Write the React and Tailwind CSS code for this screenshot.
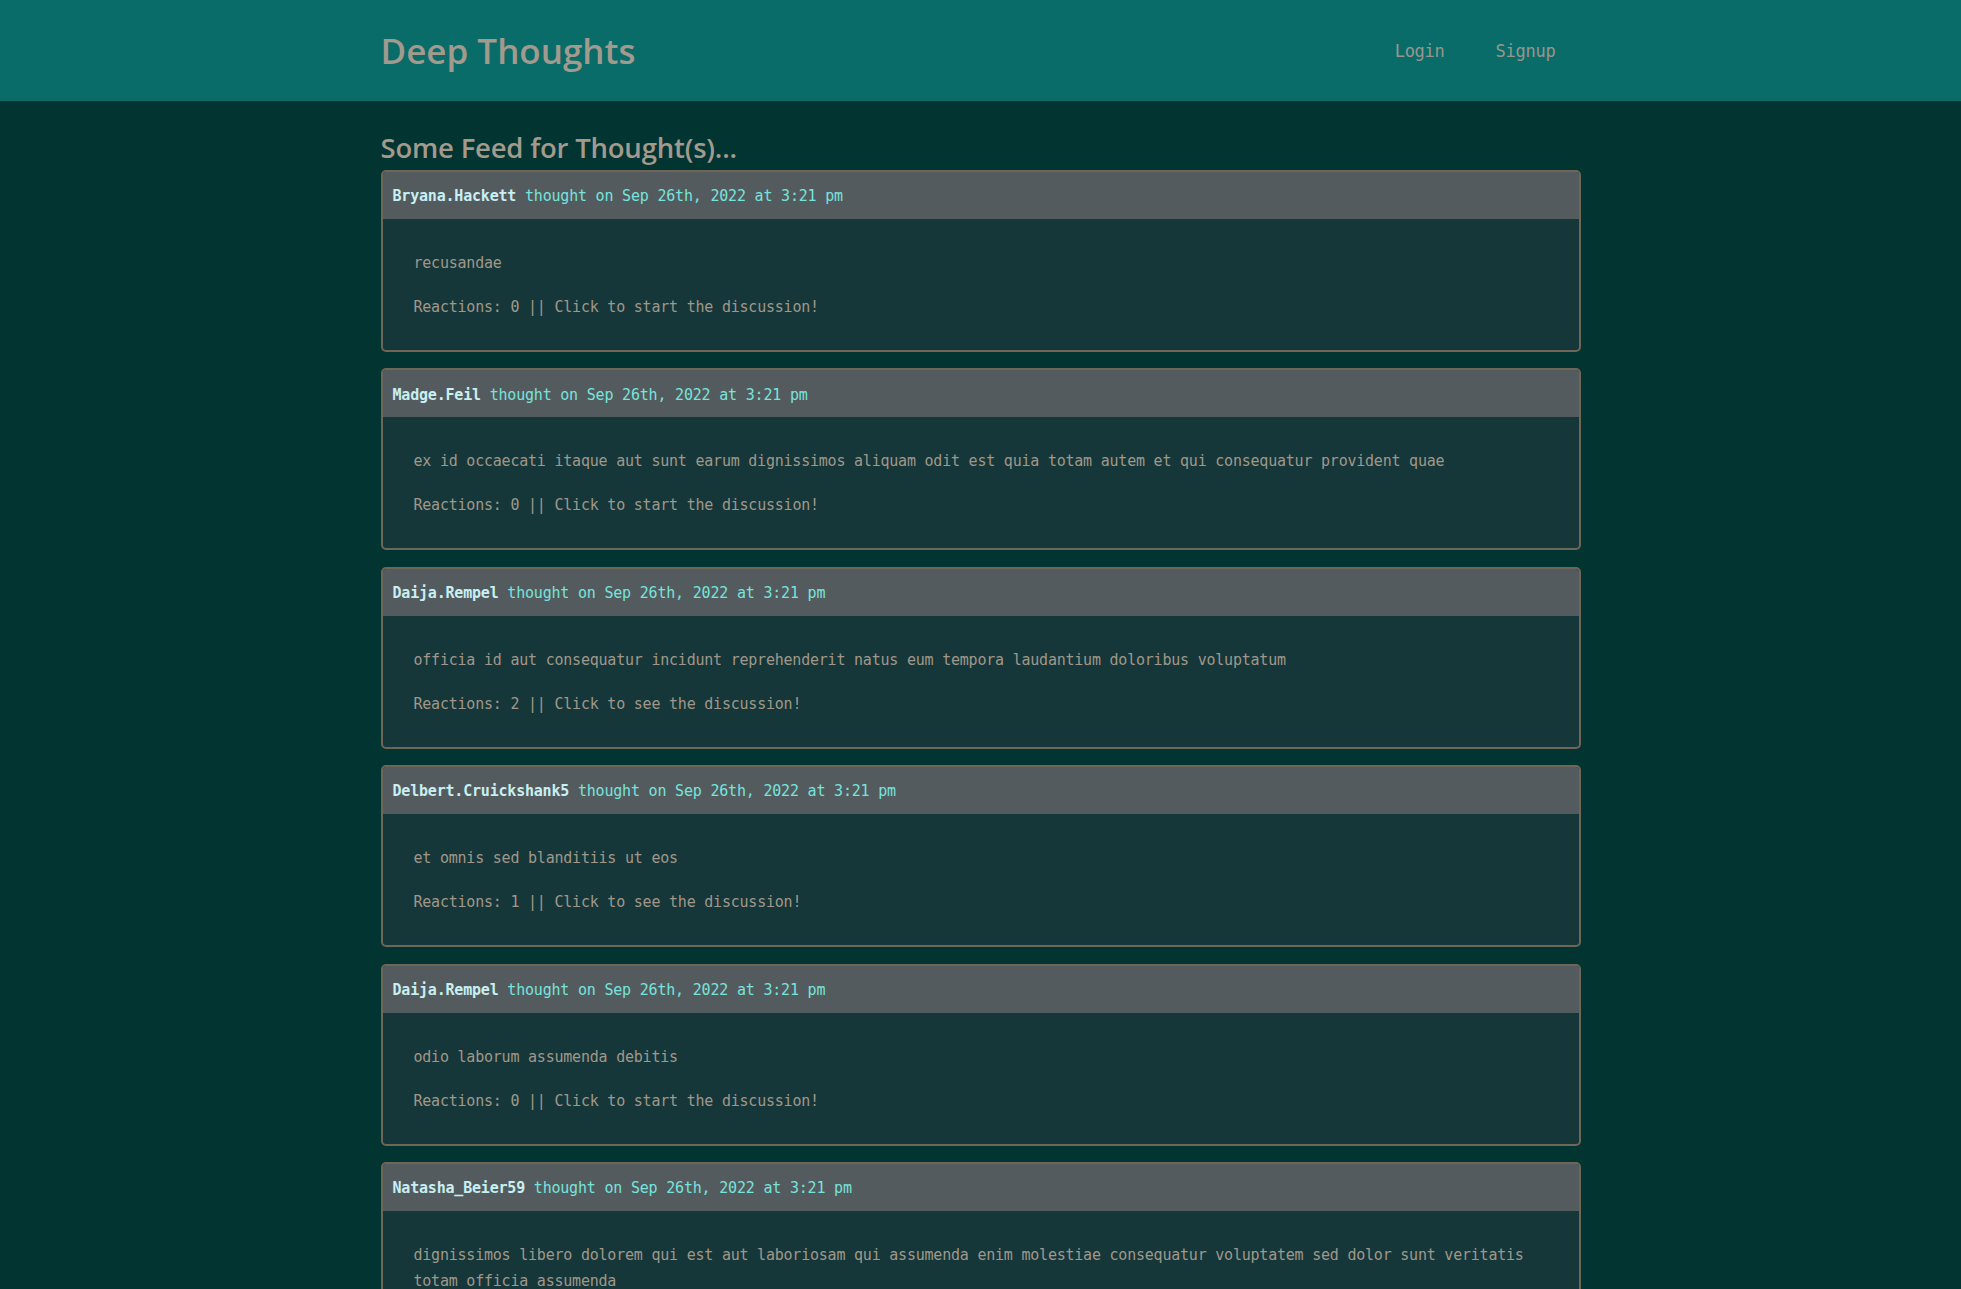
import React from "react";

const thoughts = [
  { user: "Bryana.Hackett", text: "recusandae", reactions: 0 },
  {
    user: "Madge.Feil",
    text: "ex id occaecati itaque aut sunt earum dignissimos aliquam odit est quia totam autem et qui consequatur provident quae",
    reactions: 0,
  },
  {
    user: "Daija.Rempel",
    text: "officia id aut consequatur incidunt reprehenderit natus eum tempora laudantium doloribus voluptatum",
    reactions: 2,
  },
  { user: "Delbert.Cruickshank5", text: "et omnis sed blanditiis ut eos", reactions: 1 },
  { user: "Daija.Rempel", text: "odio laborum assumenda debitis", reactions: 0 },
  {
    user: "Natasha_Beier59",
    text: "dignissimos libero dolorem qui est aut laboriosam qui assumenda enim molestiae consequatur voluptatem sed dolor sunt veritatis totam officia assumenda",
    reactions: 0,
  },
];

const mono = { fontFamily: '"DejaVu Sans Mono", "Liberation Mono", monospace' };

function Card({ t }) {
  return (
    <div className="border-2 border-[#6e6656] rounded-[5px] overflow-hidden bg-[#163739]">
      <div
        className="h-[47px] bg-[#545b5e] flex items-center px-[10px] pt-[2px] text-[15px] tracking-[-0.2px] whitespace-nowrap"
        style={mono}
      >
        <span className="font-bold text-[#c8eff1]">{t.user}</span>
        <span className="text-[#76e4dc]">&nbsp;thought on Sep 26th, 2022 at 3:21 pm</span>
      </div>
      <div
        className="px-[31px] pt-[31px] pb-[30px] flex flex-col gap-[18px] text-[15px] tracking-[-0.22px] leading-[26px] text-[#a0978a]"
        style={mono}
      >
        <p>{t.text}</p>
        <p>
          Reactions: {t.reactions} || Click to {t.reactions ? "see" : "start"} the discussion!
        </p>
      </div>
    </div>
  );
}

export default function App() {
  return (
    <div className="min-h-screen bg-[#023431]">
      <header className="h-[101px] bg-[#0a6c69]">
        <div className="w-[1200px] mx-auto h-full flex items-center justify-between">
          <h1
            className="text-[35px] font-semibold leading-none text-[#a29a8d] tracking-[0px]"
            style={{ fontFamily: '"Open Sans", "Noto Sans", sans-serif' }}
          >
            Deep Thoughts
          </h1>
          <nav
            className="flex gap-[51px] pr-[25px] text-[17px] tracking-[-0.25px] text-[#98968c] mt-[2px]"
            style={mono}
          >
            <a>Login</a>
            <a>Signup</a>
          </nav>
        </div>
      </header>
      <main className="w-[1200px] mx-auto pt-[29px]">
        <h2
          className="text-[27.5px] font-semibold leading-[36px] text-[#a29a8d] mb-[4px] tracking-[-0.2px]"
          style={{ fontFamily: '"Open Sans", "Noto Sans", sans-serif' }}
        >
          Some Feed for Thought(s)...
        </h2>
        <div className="flex flex-col gap-[16.4px]">
          {thoughts.map((t, i) => (
            <Card key={i} t={t} />
          ))}
        </div>
      </main>
    </div>
  );
}
